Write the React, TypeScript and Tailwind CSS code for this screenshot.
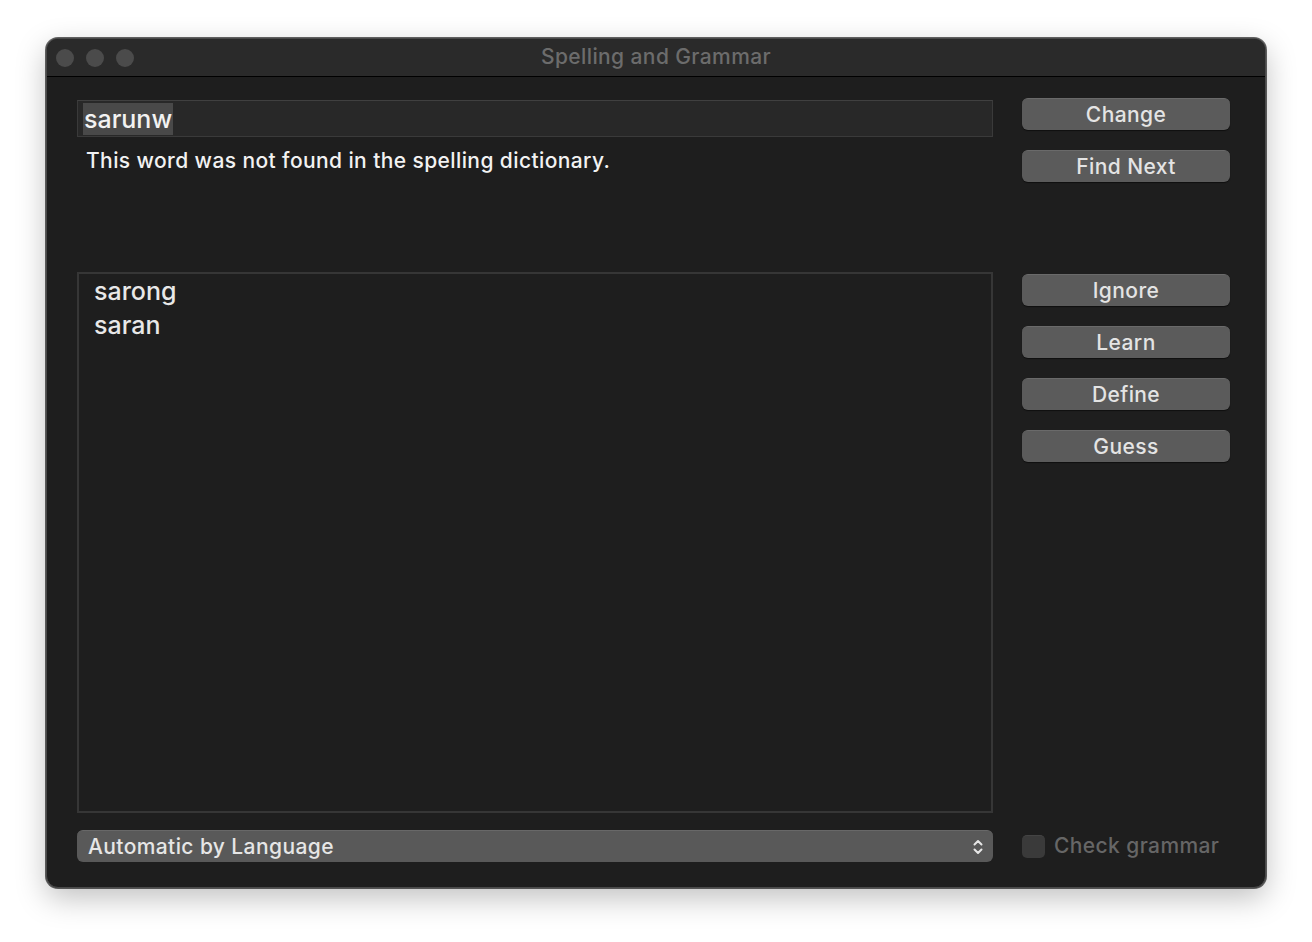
import React from 'react'

const font = {fontFamily: 'Inter, "Noto Sans", sans-serif'}

const MacButton = ({label}: {label: string}) => (
    <div className="h-[32px] w-full rounded-[6px] bg-[#5b5b5b] border-t border-[#6a6a6a] shadow-[0_1px_1px_rgba(0,0,0,0.5)] flex items-center justify-center text-[21px] tracking-[0.4px] font-medium text-[#e4e4e4] leading-none">
        {label}
    </div>
)

const App = () => {
    return (
        <div className="min-h-screen w-full bg-white pl-[46px] pt-[38px]" style={font}>
            <div className="w-[1220px] h-[850px] rounded-[12px] border border-[#4a4a4a] bg-[#1e1e1e] flex flex-col overflow-hidden shadow-[0_10px_30px_rgba(0,0,0,0.25),0_0_0_1px_rgba(0,0,0,0.6)]">
                {/* title bar */}
                <div className="relative h-[38px] shrink-0 bg-[#2a2a2a] border-b border-black flex items-center">
                    <div className="flex gap-[12px] pl-[9px]">
                        <span className="w-[18px] h-[18px] rounded-full bg-[#4b4b4b]"/>
                        <span className="w-[18px] h-[18px] rounded-full bg-[#4b4b4b]"/>
                        <span className="w-[18px] h-[18px] rounded-full bg-[#4b4b4b]"/>
                    </div>
                    <div className="absolute inset-0 flex items-center justify-center text-[21px] tracking-[0.4px] font-medium text-[#6c6c6c] pointer-events-none pb-[1px]">
                        Spelling and Grammar
                    </div>
                </div>

                {/* body */}
                <div className="flex-1 flex pl-[30px] pt-[21px] pb-[25px]">
                    {/* left column */}
                    <div className="w-[916px] flex flex-col">
                        <div className="h-[174px] flex flex-col">
                            <div className="mt-[2px] h-[37px] bg-[#282828] border border-[#3a3a3a] border-t-[#404040] flex items-center px-[5px]">
                                <span className="bg-[#494949] text-[#f2f2f2] text-[25px] font-medium leading-[32px] px-[1px]">sarunw</span>
                            </div>
                            <div className="mt-[12px] pl-[9px] text-[21px] tracking-[0.4px] font-medium leading-[24px] text-[#f2f2f2]">
                                This word was not found in the spelling dictionary.
                            </div>
                        </div>
                        <div className="h-[541px] border-2 border-[#363636] bg-[#1e1e1e] pl-[15px] text-[25px] font-medium text-[#e8e8e8]">
                            <div className="h-[34px] leading-[34px]">sarong</div>
                            <div className="h-[34px] leading-[34px]">saran</div>
                        </div>
                        <div className="mt-[17px] h-[32px] rounded-[6px] bg-[#595959] border-t border-[#686868] flex items-center justify-between pl-[11px] pr-[9px] text-[21px] tracking-[0.4px] font-medium text-[#e6e6e6]">
                            <span>Automatic by Language</span>
                            <svg width="12" height="18" viewBox="0 0 12 18" fill="none" stroke="#e6e6e6" strokeWidth="2" strokeLinecap="round" strokeLinejoin="round">
                                <path d="M2.5 6.5 L6 3 L9.5 6.5"/>
                                <path d="M2.5 11.5 L6 15 L9.5 11.5"/>
                            </svg>
                        </div>
                    </div>

                    {/* right column */}
                    <div className="ml-[29px] w-[208px] flex flex-col">
                        <MacButton label="Change"/>
                        <div className="mt-[20px]"><MacButton label="Find Next"/></div>
                        <div className="mt-[92px]"><MacButton label="Ignore"/></div>
                        <div className="mt-[20px]"><MacButton label="Learn"/></div>
                        <div className="mt-[20px]"><MacButton label="Define"/></div>
                        <div className="mt-[20px]"><MacButton label="Guess"/></div>
                        <div className="mt-auto h-[32px] flex items-center gap-[9px]">
                            <span className="w-[23px] h-[23px] rounded-[5px] bg-[#3a3a3a] border-t border-[#444]"/>
                            <span className="text-[21px] tracking-[0.4px] font-medium text-[#666666]">Check grammar</span>
                        </div>
                    </div>
                </div>
            </div>
        </div>
    )
}

export default App
